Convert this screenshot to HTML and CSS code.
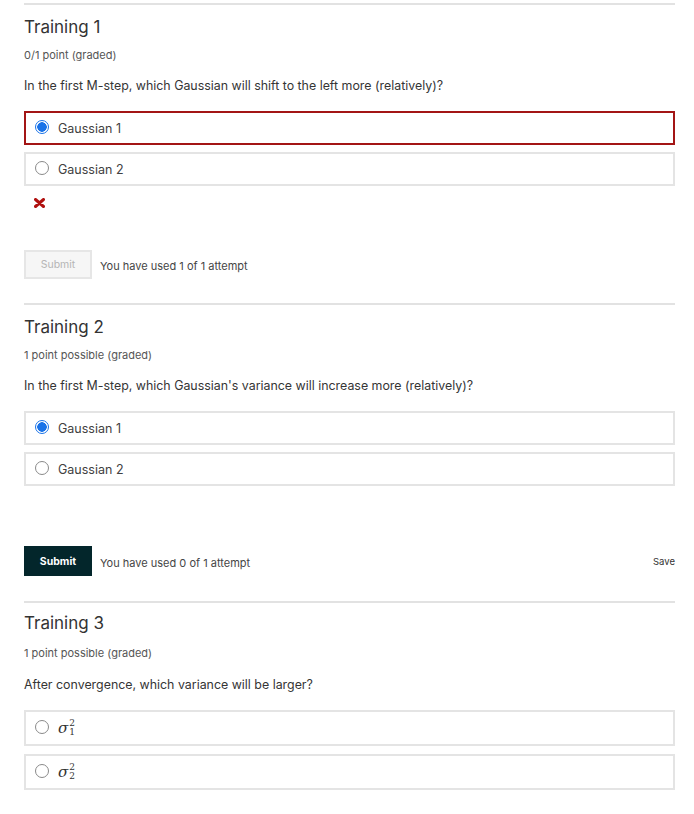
FILE: index.html
```html
<!DOCTYPE html>
<html lang="en">
<head>
    <meta charset="UTF-8">
    <title>Training</title>
    <link rel="stylesheet" href="styles.css">
</head>
<body>
    <div class="page">
        <div class="problem">
            <h3>Training 1</h3>
            <div class="points">0/1 point (graded)</div>
            <p class="question">In the first M-step, which Gaussian will shift to the left more (relatively)?</p>
            <label class="choice incorrect"><span class="radio checked"></span>Gaussian 1</label>
            <label class="choice"><span class="radio"></span>Gaussian 2</label>
            <div class="feedback">
                <svg width="11" height="10" viewBox="0 0 11 10"><path d="M1.5 1.5 L9.5 8.5 M9.5 1.5 L1.5 8.5" stroke="#b0100f" stroke-width="3" stroke-linecap="round"/></svg>
            </div>
            <div class="actions first">
                <button class="submit" disabled>Submit</button>
                <span class="attempts">You have used 1 of 1 attempt</span>
            </div>
        </div>

        <div class="problem">
            <h3>Training 2</h3>
            <div class="points">1 point possible (graded)</div>
            <p class="question">In the first M-step, which Gaussian's variance will increase more (relatively)?</p>
            <label class="choice"><span class="radio checked"></span>Gaussian 1</label>
            <label class="choice"><span class="radio"></span>Gaussian 2</label>
            <div class="actions second">
                <button class="submit active">Submit</button>
                <span class="attempts">You have used 0 of 1 attempt</span>
                <span class="save">Save</span>
            </div>
        </div>

        <div class="problem last">
            <h3>Training 3</h3>
            <div class="points">1 point possible (graded)</div>
            <p class="question">After convergence, which variance will be larger?</p>
            <label class="choice math"><span class="radio"></span><span class="sigma">σ<span class="idx"><sup>2</sup><sub>1</sub></span></span></label>
            <label class="choice math"><span class="radio"></span><span class="sigma">σ<span class="idx"><sup>2</sup><sub>2</sub></span></span></label>
        </div>
    </div>
</body>
</html>
```

FILE: styles.css
```css
body {
    margin: 0;
    font-family: Inter, "Open Sans", sans-serif;
    color: #313131;
    background: #fff;
}
.page {
    width: 651px;
    margin-left: 24px;
    padding-top: 3px;
}
.problem {
    border-top: 2px solid #e2e2e2;
}
h3 {
    font-size: 17px;
    font-weight: 400;
    color: #333;
    margin: 0;
    padding-top: 11px;
    line-height: 22px;
}
.points {
    font-size: 11px;
    color: #555;
    margin-top: 10px;
    line-height: 14px;
}
.question {
    font-size: 12.4px;
    color: #353535;
    margin: 15px 0 0 0;
    line-height: 18px;
}
.choice {
    display: flex;
    align-items: center;
    height: 30px;
    border: 2px solid #e4e4e4;
    margin-bottom: 7px;
    font-size: 12.5px;
    color: #414141;
    padding-left: 9px;
}
.problem .question + .choice {
    margin-top: 16px;
}
.choice.incorrect {
    border-color: #a31515;
}
.radio {
    width: 12px;
    height: 12px;
    border: 1px solid #8a8a8a;
    border-radius: 50%;
    margin-right: 9px;
    margin-top: -3px;
}
.radio.checked {
    border: 1px solid #1a73e8;
    background: radial-gradient(circle, #1a73e8 0 4.5px, #fff 5px);
}
.feedback {
    display: flex;
    padding-left: 10px;
    padding-top: 5px;
    height: 10px;
}
.actions {
    display: flex;
    align-items: center;
}
.actions.first {
    margin-top: 42px;
    padding-bottom: 24px;
}
.actions.second {
    margin-top: 60px;
    padding-bottom: 25px;
}
.submit {
    font-family: Inter, sans-serif;
    font-size: 10.5px;
    width: 68px;
    height: 29px;
    border: 2px solid #e6e6e6;
    background: #f6f6f6;
    color: #b5b5b5;
    padding: 0;
}
.submit.active {
    height: 30px;
    border: none;
    background: #03262b;
    color: #fff;
    font-weight: 700;
}
.attempts {
    font-size: 11px;
    color: #454545;
    margin-left: 8px;
    padding-top: 3px;
}
.save {
    margin-left: auto;
    font-size: 9.5px;
    color: #333;
    margin-top: 1px;
}
.problem.last h3 {
    padding-top: 9px;
}
.problem.last .points {
    margin-top: 12px;
}
.problem.last .question {
    margin-top: 16px;
}
.choice.math {
    height: 32px;
    margin-bottom: 8px;
}
.sigma {
    font-family: "DejaVu Serif", serif;
    font-style: italic;
    font-size: 15px;
    display: inline-flex;
    align-items: center;
    color: #333;
}
.idx {
    display: inline-flex;
    flex-direction: column;
    font-style: normal;
    line-height: 9px;
    margin-left: 1px;
}
.idx sup, .idx sub {
    vertical-align: baseline;
    font-size: 9px;
}
```
